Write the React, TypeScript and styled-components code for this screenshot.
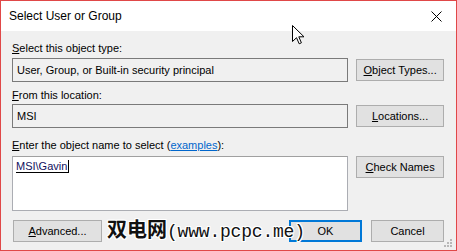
import React from 'react';
import styled, { createGlobalStyle } from 'styled-components';

const GlobalStyle = createGlobalStyle`
  html, body {
    margin: 0;
    padding: 0;
    background: #ffffff;
  }
  body {
    font-family: 'Segoe UI', 'Liberation Sans', Arial, sans-serif;
    font-size: 11px;
    color: #000;
  }
`;

const Window = styled.div`
  position: relative;
  width: 457px;
  height: 251px;
  box-sizing: border-box;
  border: 1px solid #e04848;
  background: #f0f0f0;
  display: flex;
  flex-direction: column;
  overflow: hidden;
`;

const TitleBar = styled.div`
  height: 30px;
  background: #ffffff;
  display: flex;
  align-items: center;
  justify-content: space-between;
  padding: 0 10px 0 8px;
  font-size: 12px;
`;

const Title = styled.span`
  padding-bottom: 1px;
`;

const CloseButton = styled.svg`
  width: 11px;
  height: 11px;
  margin-right: 4px;
`;

const Body = styled.div`
  flex: 1;
  display: flex;
  flex-direction: column;
  padding: 10px 12px 0 11px;
`;

const Section = styled.div<{ $gap: number }>`
  display: flex;
  flex-direction: column;
  margin-bottom: ${({ $gap }) => $gap}px;
`;

const Label = styled.div<{ $space: number }>`
  height: 15px;
  line-height: 15px;
  margin-bottom: ${({ $space }) => $space}px;
`;

const FieldRow = styled.div<{ $align: string }>`
  display: flex;
  align-items: ${({ $align }) => $align};
  gap: 8px;
`;

const ReadOnlyBox = styled.div`
  width: 337px;
  height: 24px;
  box-sizing: border-box;
  border: 1px solid #7a7a7a;
  background: #f0f0f0;
  padding: 0 4px;
  display: flex;
  align-items: center;
`;

const NameArea = styled.div`
  width: 337px;
  height: 55px;
  box-sizing: border-box;
  border: 1px solid #abadb3;
  border-top-color: #a0a0a0;
  background: #ffffff;
  padding: 2px 3px;
`;

const Selected = styled.span`
  color: #101060;
  border-bottom: 1px solid #000;
  border-right: 1px solid #000;
  padding-right: 1px;
  line-height: 14px;
`;

const Button = styled.button<{ $width: number; $focused?: boolean }>`
  width: ${({ $width }) => $width}px;
  height: 22px;
  box-sizing: border-box;
  background: #e1e1e1;
  border: ${({ $focused }) => ($focused ? '2px solid #0078d7' : '1px solid #adadad')};
  font-family: inherit;
  font-size: 11px;
  color: #000;
  padding: 0;
`;

const Link = styled.a`
  color: #0066cc;
  text-decoration: underline;
`;

const ButtonBar = styled.div`
  display: flex;
  align-items: center;
  padding-left: 1px;
`;

const Spacer = styled.div`
  flex: 1;
`;

const EndButtons = styled.div`
  display: flex;
  gap: 9px;
`;

const Grip = styled.svg`
  position: absolute;
  right: 3px;
  bottom: 2px;
  width: 9px;
  height: 9px;
`;

const Cursor = styled.svg`
  position: absolute;
  left: 291px;
  top: 24px;
  width: 13px;
  height: 20px;
`;

const Watermark = styled.div`
  position: absolute;
  left: 106px;
  top: 215px;
  display: flex;
  align-items: baseline;
  font-weight: bold;
  color: #111;
  text-shadow: -1px -1px 0 #fff, 1px -1px 0 #fff, -1px 1px 0 #fff, 1px 1px 0 #fff,
    0 1px 0 #fff, 0 -1px 0 #fff, 1px 0 0 #fff, -1px 0 0 #fff;
`;

const WatermarkHan = styled.span`
  font-family: 'Noto Sans CJK SC', sans-serif;
  font-size: 20px;
  line-height: 26px;
`;

const WatermarkUrl = styled.span`
  font-family: 'Liberation Mono', monospace;
  font-size: 18px;
  font-weight: normal;
  letter-spacing: -0.2px;
`;

export default function App() {
  return (
    <>
      <GlobalStyle />
      <Window>
        <TitleBar>
          <Title>Select User or Group</Title>
          <CloseButton viewBox="0 0 11 11">
            <path d="M0.5 0.5 L10.5 10.5 M10.5 0.5 L0.5 10.5" stroke="#000" strokeWidth="1" />
          </CloseButton>
        </TitleBar>
        <Body>
          <Section $gap={6}>
            <Label $space={2}>
              <u>S</u>elect this object type:
            </Label>
            <FieldRow $align="center">
              <ReadOnlyBox>User, Group, or Built-in security principal</ReadOnlyBox>
              <Button $width={88}>
                <u>O</u>bject Types...
              </Button>
            </FieldRow>
          </Section>
          <Section $gap={10}>
            <Label $space={1}>
              <u>F</u>rom this location:
            </Label>
            <FieldRow $align="center">
              <ReadOnlyBox>MSI</ReadOnlyBox>
              <Button $width={88}>
                <u>L</u>ocations...
              </Button>
            </FieldRow>
          </Section>
          <Section $gap={9}>
            <Label $space={3}>
              <u>E</u>nter the object name to select (<Link>examples</Link>):
            </Label>
            <FieldRow $align="flex-start">
              <NameArea>
                <Selected>MSI\Gavin</Selected>
              </NameArea>
              <Button $width={88}>
                <u>C</u>heck Names
              </Button>
            </FieldRow>
          </Section>
          <ButtonBar>
            <Button $width={89}>
              <u>A</u>dvanced...
            </Button>
            <Spacer />
            <EndButtons>
              <Button $width={73} $focused>
                OK
              </Button>
              <Button $width={73}>Cancel</Button>
            </EndButtons>
          </ButtonBar>
        </Body>
        <Watermark>
          <WatermarkHan>双电网</WatermarkHan>
          <WatermarkUrl>(www.pcpc.me)</WatermarkUrl>
        </Watermark>
        <Grip viewBox="0 0 9 9">
          {[
            [6, 0],
            [3, 3],
            [6, 3],
            [0, 6],
            [3, 6],
            [6, 6],
          ].map(([x, y]) => (
            <rect key={`${x}-${y}`} x={x} y={y} width="2" height="2" fill="#b8b8b8" />
          ))}
        </Grip>
        <Cursor viewBox="0 0 13 20">
          <path
            d="M0.5 0.5 L0.5 16.5 L4.5 12.7 L7.2 18.8 L9.4 17.8 L6.8 11.8 L12 11.8 Z"
            fill="#fff"
            stroke="#000"
            strokeWidth="1"
            strokeLinejoin="miter"
          />
        </Cursor>
      </Window>
    </>
  );
}
